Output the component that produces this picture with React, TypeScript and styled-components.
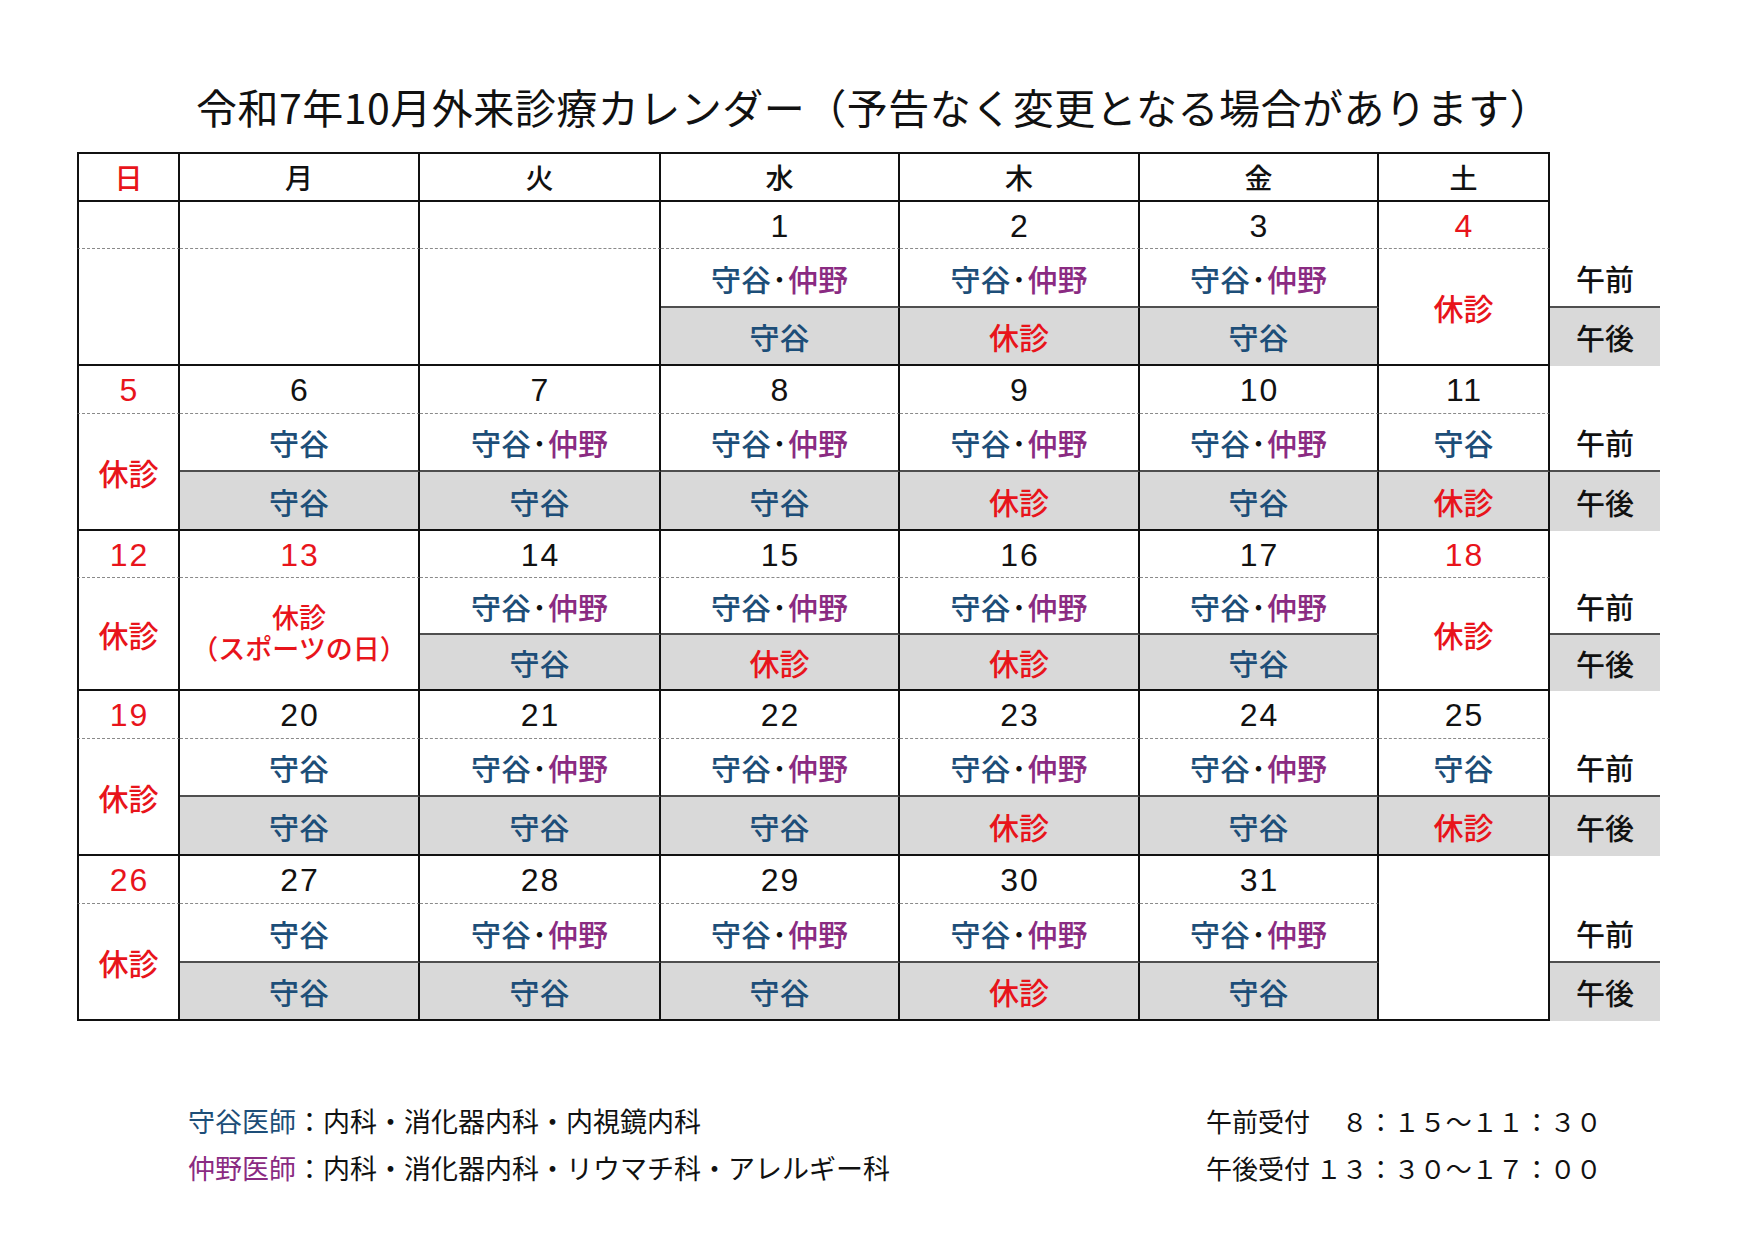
import React from 'react'
import styled, { createGlobalStyle } from 'styled-components'

type Slot = 'mo' | 'both' | 'off' | 'none'

interface IDay {
    date: string
    red?: boolean
    am?: Slot
    pm?: Slot
    merged?: 'off' | 'none' | 'holiday'
    full?: boolean
}

interface IWeek {
    rows: number[]
    days: IDay[]
}

const COLUMNS = '103px 240px 241px 239px 240px 239px 171px 110px'
const WEEKDAYS = ['日', '月', '火', '水', '木', '金', '土']

const weeks: IWeek[] = [
    {
        rows: [47, 59, 58],
        days: [
            { date: '', merged: 'none' },
            { date: '', merged: 'none' },
            { date: '', merged: 'none' },
            { date: '1', am: 'both', pm: 'mo' },
            { date: '2', am: 'both', pm: 'off' },
            { date: '3', am: 'both', pm: 'mo' },
            { date: '4', red: true, merged: 'off' },
        ],
    },
    {
        rows: [48, 58, 59],
        days: [
            { date: '5', red: true, merged: 'off' },
            { date: '6', am: 'mo', pm: 'mo' },
            { date: '7', am: 'both', pm: 'mo' },
            { date: '8', am: 'both', pm: 'mo' },
            { date: '9', am: 'both', pm: 'off' },
            { date: '10', am: 'both', pm: 'mo' },
            { date: '11', am: 'mo', pm: 'off' },
        ],
    },
    {
        rows: [47, 57, 56],
        days: [
            { date: '12', red: true, merged: 'off' },
            { date: '13', red: true, merged: 'holiday' },
            { date: '14', am: 'both', pm: 'mo' },
            { date: '15', am: 'both', pm: 'off' },
            { date: '16', am: 'both', pm: 'off' },
            { date: '17', am: 'both', pm: 'mo' },
            { date: '18', red: true, merged: 'off' },
        ],
    },
    {
        rows: [48, 58, 59],
        days: [
            { date: '19', red: true, merged: 'off' },
            { date: '20', am: 'mo', pm: 'mo' },
            { date: '21', am: 'both', pm: 'mo' },
            { date: '22', am: 'both', pm: 'mo' },
            { date: '23', am: 'both', pm: 'off' },
            { date: '24', am: 'both', pm: 'mo' },
            { date: '25', am: 'mo', pm: 'off' },
        ],
    },
    {
        rows: [48, 59, 58],
        days: [
            { date: '26', red: true, merged: 'off' },
            { date: '27', am: 'mo', pm: 'mo' },
            { date: '28', am: 'both', pm: 'mo' },
            { date: '29', am: 'both', pm: 'mo' },
            { date: '30', am: 'both', pm: 'off' },
            { date: '31', am: 'both', pm: 'mo' },
            { date: '', full: true },
        ],
    },
]

const Doctors: React.FC<{ slot?: Slot }> = ({ slot }) => {
    if (slot === 'mo') return <Moriya>守谷</Moriya>
    if (slot === 'off') return <Closed>休診</Closed>
    if (slot === 'both')
        return (
            <>
                <Moriya>守谷</Moriya>
                <Dot>･</Dot>
                <Nakano>仲野</Nakano>
            </>
        )
    return null
}

const Week: React.FC<{ week: IWeek }> = ({ week }) => {
    const cells: React.ReactNode[] = []
    // date row
    week.days.forEach((d, i) => {
        if (d.full) {
            cells.push(<MergedCell key={`f${i}`} $span={3} $first={i === 0} />)
        } else {
            cells.push(
                <DateCell key={`d${i}`} $red={!!d.red} $first={i === 0}>
                    {d.date}
                </DateCell>
            )
        }
    })
    cells.push(<LabelSpacer key="ls" />)
    // morning row
    week.days.forEach((d, i) => {
        if (d.full) return
        if (d.merged) {
            cells.push(
                <MergedCell key={`m${i}`} $span={2} $first={i === 0}>
                    {d.merged === 'off' && <Closed>休診</Closed>}
                    {d.merged === 'holiday' && (
                        <Holiday>
                            <HolidayLine>休診</HolidayLine>
                            <HolidayLine>（スポーツの日）</HolidayLine>
                        </Holiday>
                    )}
                </MergedCell>
            )
        } else {
            cells.push(
                <AmCell key={`a${i}`} $first={i === 0}>
                    <Doctors slot={d.am} />
                </AmCell>
            )
        }
    })
    cells.push(<AmLabel key="al">午前</AmLabel>)
    // afternoon row
    week.days.forEach((d, i) => {
        if (d.full || d.merged) return
        cells.push(
            <PmCell key={`p${i}`} $first={i === 0}>
                <Doctors slot={d.pm} />
            </PmCell>
        )
    })
    cells.push(<PmLabel key="pl">午後</PmLabel>)

    return <WeekGrid style={{ gridTemplateRows: week.rows.map((r) => `${r}px`).join(' ') }}>{cells}</WeekGrid>
}

const App: React.FC = () => {
    return (
        <Page>
            <GlobalStyle />
            <Title>令和7年10月外来診療カレンダー（予告なく変更となる場合があります）</Title>
            <Calendar>
                <HeaderGrid>
                    {WEEKDAYS.map((w, i) => (
                        <HeaderCell key={w} $red={i === 0} $first={i === 0}>
                            {w}
                        </HeaderCell>
                    ))}
                    <LabelSpacer />
                </HeaderGrid>
                {weeks.map((w, i) => (
                    <Week key={i} week={w} />
                ))}
            </Calendar>
            <Footer>
                <Notes>
                    <NoteLine>
                        <Moriya>守谷医師</Moriya>：内科・消化器内科・内視鏡内科
                    </NoteLine>
                    <NoteLine>
                        <Nakano>仲野医師</Nakano>：内科・消化器内科・リウマチ科・アレルギー科
                    </NoteLine>
                </Notes>
                <Hours>
                    <HoursLine>午前受付　 ８：１５～１１：３０</HoursLine>
                    <HoursLine>午後受付 １３：３０～１７：００</HoursLine>
                </Hours>
            </Footer>
        </Page>
    )
}

export default App

const GlobalStyle = createGlobalStyle`
body {
    margin: 0;
    background: #fff;
    font-family: "Noto Sans CJK JP", "Noto Sans", sans-serif;
    color: #111;
}
`

const Page = styled.div`
width: 1754px;
height: 1240px;
padding-left: 77px;
box-sizing: border-box;
overflow: hidden;
`

const Title = styled.h1`
margin: 82px 0 22px 0;
padding-left: 119px;
font-size: 41px;
line-height: 48px;
font-weight: 400;
letter-spacing: 0.5px;
white-space: nowrap;
`

const Calendar = styled.div`
display: flex;
flex-direction: column;
width: 1582px;
`

const HeaderGrid = styled.div`
display: grid;
grid-template-columns: ${COLUMNS};
grid-template-rows: 50px;
`

const WeekGrid = styled.div`
display: grid;
grid-template-columns: ${COLUMNS};
`

const Cell = styled.div<{ $first?: boolean }>`
box-sizing: border-box;
display: flex;
align-items: center;
justify-content: center;
text-align: center;
border-right: 2px solid #111;
border-left: ${({ $first }) => ($first ? '2px solid #111' : 'none')};
`

const HeaderCell = styled(Cell)<{ $red: boolean }>`
border-top: 2px solid #111;
border-bottom: 2px solid #111;
font-size: 28px;
font-weight: 500;
color: ${({ $red }) => ($red ? '#e8141b' : '#111')};
`

const DateCell = styled(Cell)<{ $red: boolean }>`
border-bottom: 1px dashed #8a8a8a;
font-family: "Liberation Sans", "Noto Sans", sans-serif;
font-size: 32px;
letter-spacing: 2px;
padding-left: 2px;
padding-top: 2px;
color: ${({ $red }) => ($red ? '#e8141b' : '#111')};
`

const AmCell = styled(Cell)`
border-bottom: 2px solid #4f4f4f;
font-size: 30px;
font-weight: 500;
`

const PmCell = styled(Cell)`
background: #d9d9d9;
border-bottom: 2px solid #111;
font-size: 30px;
font-weight: 500;
`

const MergedCell = styled(Cell)<{ $span: number }>`
grid-row: span ${({ $span }) => $span};
border-bottom: 2px solid #111;
font-size: 30px;
font-weight: 500;
`

const LabelSpacer = styled.div``

const AmLabel = styled.div`
display: flex;
align-items: center;
justify-content: center;
box-sizing: border-box;
border-bottom: 2px solid #4f4f4f;
font-size: 29px;
font-weight: 500;
`

const PmLabel = styled.div`
display: flex;
align-items: center;
justify-content: center;
background: #d9d9d9;
font-size: 29px;
font-weight: 500;
`

const Moriya = styled.span`
color: #1d4e78;
`

const Nakano = styled.span`
color: #8a2b82;
`

const Closed = styled.span`
color: #e8141b;
`

const Dot = styled.span`
color: #111;
margin: 0 1px;
`

const Holiday = styled.div`
display: flex;
flex-direction: column;
align-items: center;
color: #e8141b;
margin-top: 2px;
`

const HolidayLine = styled.span`
display: block;
font-family: "Liberation Sans", "Noto Sans CJK JP", sans-serif;
font-size: 27px;
line-height: 31px;
height: 31px;
`

const Footer = styled.div`
display: flex;
margin-top: 76px;
padding-left: 111px;
`

const Notes = styled.div`
width: 1018px;
display: flex;
flex-direction: column;
`

const Hours = styled.div`
display: flex;
flex-direction: column;
`

const NoteLine = styled.div`
font-size: 27px;
line-height: 47px;
white-space: pre;
color: #111;
`

const HoursLine = styled.div`
font-size: 26px;
line-height: 47px;
white-space: pre;
color: #111;
`
